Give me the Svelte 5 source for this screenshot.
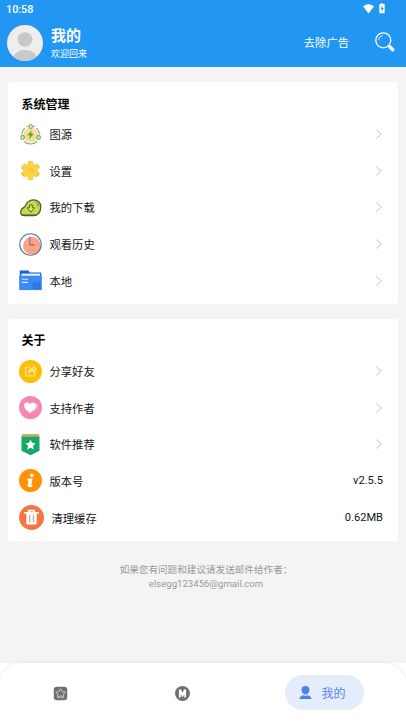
<script>
  const groups = [
    {
      title: '系统管理',
      rows: [
        { icon: 'source', label: '图源' },
        { icon: 'gear', label: '设置' },
        { icon: 'download', label: '我的下载' },
        { icon: 'clock', label: '观看历史' },
        { icon: 'folder', label: '本地' }
      ]
    },
    {
      title: '关于',
      rows: [
        { icon: 'share', label: '分享好友' },
        { icon: 'heart', label: '支持作者' },
        { icon: 'badge', label: '软件推荐' },
        { icon: 'info', label: '版本号', value: 'v2.5.5' },
        { icon: 'trash', label: '清理缓存', value: '0.62MB' }
      ]
    }
  ];
</script>

{#snippet glyph(name)}
  <svg class="icon" class:large={name === 'trash'} viewBox="0 0 24 24">
    {#if name === 'source'}
      <circle cx="12.3" cy="12.5" r="7.6" fill="#f7dca0" />
      <path d="M6 5.3A9.6 9.6 0 0 0 3 12M18 5.3A9.6 9.6 0 0 1 21.3 12M5.5 19.3a9.6 9.6 0 0 0 13.2 0M8 4 10 3.3M14.3 3.3 16.5 4" fill="none" stroke="#78b956" stroke-width="1.1" />
      <g fill="#fff" stroke="#58a53a" stroke-width="1.1"><circle cx="12.2" cy="3.6" r="1.8" /><circle cx="3.8" cy="15" r="1.8" /><circle cx="20.5" cy="15" r="1.8" /></g>
      <path d="m13.4 7.8-5 5.1h3l-1 4 5.2-5.6h-3z" fill="#5aa52c" />
    {:else if name === 'gear'}
      <path d="M9.600 2.700q2.400-.9 4.800 0l.3 3.200.9.5 2.900-1.200q2.400 1.300 2.900 3.900L19.200 11v2l2.200 1.900q-.5 2.600-2.900 3.900l-2.900-1.200-.9.5-.3 3.200q-2.400.9-4.800 0l-.3-3.200-.9-.5-2.900 1.200Q3.100 17.500 2.600 14.900L4.800 13v-2L2.600 9.100Q3.100 6.500 5.500 5.200L8.400 6.400l.9-.5z" fill="#fcd443" stroke="#e8bc3c" stroke-width=".6" />
      <circle cx="12" cy="12" r="2.500" fill="#fbd13a" stroke="#dda83a" stroke-width=".7" stroke-dasharray="2 1" />
      <path d="M3.500 9v1.500M4 15v2M19.500 7l1 1M18.500 17l1.500-1" stroke="#a89850" stroke-width=".8" />
    {:else if name === 'download'}
      <path d="M5.500 20.500Q1.300 20.400 1.700 16 2.500 12.900 5.800 11.400C8 7.700 10 4 15 4c4.700.1 7.700 3 7.700 7.300 0 5.600-3 9.200-7.700 9.200z" fill="#c8d84e" stroke="#50592c" stroke-width="1.300" />
      <path d="M3 19.500h15.500M18 6q2.400 2 2 5" fill="none" stroke="#697536" stroke-width=".9" />
      <path d="M10.900 9.300h3v3h2.300L12.400 17 8.600 12.300h2.300z" fill="#dce66b" stroke="#59632e" stroke-width="1" />
    {:else if name === 'clock'}
      <circle cx="13.500" cy="13.300" r="9.300" fill="#fba288" />
      <circle cx="12" cy="12" r="11.200" fill="none" stroke="#587999" stroke-width="1.200" />
      <path d="M11.300 4v8.400h5" fill="none" stroke="#956577" stroke-width="1.200" />
    {:else if name === 'folder'}
      <path d="M.8 1.500h9l1.500 2.200h12V10H.8z" fill="#1461db" />
      <path d="M2.500 4.800H22v2.500H2.500z" fill="#e9f4ff" />
      <path d="M.2 7h23.600v15H.2z" fill="#3e88fb" />
      <path d="M3 10.700h6.500M3 14h6.500" stroke="#d7e9ff" stroke-width="1.200" />
      <path d="M15 14.500h7v6h-7zM17 14.700v2.500h3v-2.500" fill="#337bed" stroke="#2466cc" stroke-width=".8" />
    {:else if name === 'share'}
      <circle cx="12" cy="12" r="12" fill="#ffbd03" />
      <path d="M11.500 7.500H6.900v9.100h9.800v-4M10 13.200c.4-3 2-4.500 5-4.800V6.700l2.900 2.800-2.900 2.700v-1.900c-2.200.1-3.500 1-5 2.900z" fill="none" stroke="#fff0bc" stroke-width="1.100" />
    {:else if name === 'heart'}
      <circle cx="12" cy="12" r="12" fill="#f488b3" />
      <path d="M14.800 16.700C22 11.400 20 7 16.500 7l-2 1.300" fill="#f8b9d3" />
      <path d="M11.300 17.700C7.600 15.100 5.300 12.900 5.300 10c0-3.400 4.300-4.300 6-1.300 1.800-3 6.200-2 6.200 1.300 0 2.900-2.300 5.100-6.200 7.700z" fill="#fff" />
    {:else if name === 'badge'}
      <path d="M2.600 3.200h18.800v15.200L12 23.200 2.600 18.400z" fill="#14a967" />
      <path d="M3.500 1h17l1 2.800h-19z" fill="#c6ad63" />
      <path d="m12 7 1.600 3.300 3.700.5-2.700 2.600.7 3.700-3.300-1.800-3.300 1.800.7-3.700-2.700-2.600 3.700-.5z" fill="#fff" />
    {:else if name === 'info'}
      <circle cx="12" cy="12" r="12" fill="#ff9102" />
      <circle cx="13.400" cy="6.600" r="1.900" fill="#fff" />
      <path d="M9.200 10h5l-1.500 6.900 1.700-.5-.6 1.900c-2.500 1.400-5.300.8-4.900-1.300l1-4.900H8.600z" fill="#fff" />
    {:else}
      <circle cx="12" cy="12" r="12" fill="#f57543" />
      <path d="M5 7.500h14M9.300 7V5.300h5.300V7" fill="none" stroke="#fff" stroke-width="1.700" />
      <path d="M7 8h10v9.500q0 1.300-1.500 1.300h-7Q7 18.800 7 17.500z" fill="#fff" />
      <path d="M10.200 9.500v7M13.800 9.500v7" stroke="#f57543" stroke-width=".8" />
    {/if}
  </svg>
{/snippet}

<div class="screen">
  <header>
    <div class="status">
      <span>10:58</span>
      <svg class="signal" viewBox="0 0 24 12">
        <path d="M1 3.300Q6.500-.8 12 3.300L6.500 10.500z" fill="#fff" />
        <path d="M18 1h1V.3h2V1h1q.7 0 .7.700v7.800q0 .7-.7.700h-4q-.7 0-.7-.7V1.700q0-.7.7-.7z" fill="#fff" />
        <path d="m20.500 2.500-1.900 3.600h1.200v2.400l1.900-3.600h-1.200z" fill="#2196f3" />
      </svg>
    </div>
    <div class="profile">
      <svg class="avatar" viewBox="0 0 36 36">
        <circle cx="18" cy="18" r="18" fill="#eee" />
        <circle cx="18" cy="14.500" r="7.300" fill="#c8c8c8" />
        <path d="M6.200 31.500C9 27 13 25 18 25s9 2 11.800 6.500A18 18 0 0 1 6.200 31.500z" fill="#c8c8c8" />
      </svg>
      <div class="who"><strong>我的</strong><small>欢迎回来</small></div>
      <span class="ads">去除广告</span>
      <svg class="search" viewBox="0 0 20 20">
        <circle cx="8.300" cy="8.300" r="7.500" fill="none" stroke="#fff" stroke-width="1.300" />
        <path d="M3.400 8.200q.4-4 4.400-4.800" fill="none" stroke="#fff" stroke-width=".8" />
        <path d="m13.200 13.200 1.800 1.800" stroke="#fff" stroke-width="1.300" />
        <path d="m14.800 14.800 2.900 2.900" stroke="#fff" stroke-width="3.400" stroke-linecap="round" />
      </svg>
    </div>
  </header>

  <main>
    {#each groups as group}
      <section>
        <h2>{group.title}</h2>
        {#each group.rows as row}
          <div class="row" class:cache={row.icon === 'trash'}>
            {@render glyph(row.icon)}
            <span class="label">{row.label}</span>
            {#if row.value}
              <span class="value">{row.value}</span>
            {:else}
              <svg class="chevron" viewBox="0 0 7 10"><path d="m.3.500 5 4.500-5 4.500" fill="none" stroke="#bdbdbd" stroke-width=".9" /></svg>
            {/if}
          </div>
        {/each}
      </section>
    {/each}
    <p>如果您有问题和建议请发送邮件给作者：<br />elsegg123456@gmail.com</p>
  </main>

  <nav>
    <div class="tab">
      <svg viewBox="0 0 16 16">
        <rect x=".8" y=".8" width="14.400" height="14.400" rx="3.500" fill="#707070" />
        <path d="m8 3 1.700 2.900 3.300.7-2.100 2.600v3.300H9.300v-1.800H6.700v1.800H5.100V9.200L3 6.600l3.300-.7z" fill="none" stroke="#ddd" stroke-width=".9" />
      </svg>
    </div>
    <div class="tab">
      <svg viewBox="0 0 16 16">
        <circle cx="8" cy="8" r="8" fill="#707070" />
        <path d="M4.200 12.200V3.800h2.300L8 7.500l1.500-3.700h2.300v8.400H9.900V8.500L8.600 11.500H7.400L6.100 8.500v3.700z" fill="#fff" />
      </svg>
    </div>
    <div class="tab active">
      <svg viewBox="0 0 16 16">
        <path d="M8 1a4.200 4.200 0 0 1 4.200 4.200C12.200 7.500 10.500 10 8 10S3.800 7.500 3.800 5.200A4.200 4.200 0 0 1 8 1zM1.500 15c.3-2.600 2.500-3.900 5-4.100L8 12l1.500-1.100c2.500.2 4.700 1.500 5 4.100z" fill="#4c82ee" />
      </svg>
      <span>我的</span>
    </div>
  </nav>
</div>

<style>
  :global(body) { margin: 0; }
  .screen {
    width: 406px;
    height: 723px;
    box-sizing: border-box;
    display: flex;
    flex-direction: column;
    overflow: hidden;
    background: #fff;
    color: #151515;
    font-family: Roboto, "Noto Sans CJK SC", sans-serif;
    font-size: 11.3px;
  }
  svg { display: block; flex: none; }
  header { height: 67px; flex: none; background: #2196f3; color: #fff; }
  .status {
    height: 18px;
    padding: 0 20px 0 6px;
    display: flex;
    align-items: center;
    justify-content: space-between;
    font-size: 10.8px;
    font-weight: 500;
  }
  .status span { padding-top: 1px; }
  .signal { width: 24px; height: 12px; margin-top: -1px; }
  .profile { height: 49px; padding: 0 11px 0 7px; display: flex; align-items: center; }
  .avatar { width: 36px; height: 36px; }
  .who { margin-left: 8px; padding-top: 3px; flex: 1; display: flex; flex-direction: column; }
  strong { font-size: 15px; line-height: 20px; font-weight: 700; }
  small { font-size: 9px; line-height: 17px; }
  .ads { margin-top: -1px; }
  .search { width: 20px; height: 20px; margin: -1px 0 0 26px; }
  main { height: 596px; flex: none; padding: 15px 8px 0; box-sizing: border-box; background: #f4f4f4; }
  section {
    height: 222px;
    margin-bottom: 15.400px;
    padding: 11px 15px 0 11.500px;
    box-sizing: border-box;
    border-radius: 2px;
    background: #fff;
  }
  h2 { margin: 0 0 0 2px; height: 22.800px; line-height: 23px; font-size: 12px; font-weight: 700; color: #050505; }
  section:first-child h2 { line-height: 24px; }
  .row { height: 36.400px; display: flex; align-items: center; }
  section:first-child .row { height: 36.650px; }
  .icon { width: 23px; height: 23px; margin: 0 7.500px 0 -.5px; }
  .icon.large { width: 25px; height: 25px; }
  .cache { height: 38px; }
  .label { flex: 1; }
  .value { font-size: 11.100px; }
  .chevron { width: 7px; height: 10px; }
  p { margin: 22px 0 0; padding-left: 6px; text-align: center; font-size: 9.600px; line-height: 13.500px; color: #999; }
  nav {
    position: relative;
    height: 60px;
    flex: none;
    display: flex;
    align-items: center;
    background: #fff;
    border-radius: 22px 22px 0 0;
    box-shadow: 0 0 4px rgba(0, 0, 0, .1);
  }
  .tab { width: 121.500px; display: flex; justify-content: center; }
  .tab svg { width: 15px; height: 15px; }
  .active {
    box-sizing: border-box;
    width: 79px;
    height: 35px;
    margin: -1px 0 0 42px;
    padding-right: 5px;
    border-radius: 18px;
    align-items: center;
    background: #e5edfd;
    color: #5583e6;
    font-size: 12px;
    gap: 8px;
  }
</style>
